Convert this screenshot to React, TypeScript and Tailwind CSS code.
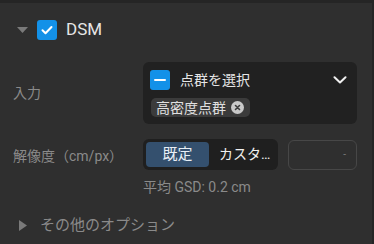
import React from 'react'

const font = { fontFamily: 'Roboto, "Noto Sans CJK JP", sans-serif' }

function CheckIcon() {
  return (
    <svg width="14" height="14" viewBox="0 0 14 14" fill="none">
      <path d="M2.5 7.3l3 3 6-6.3" stroke="white" strokeWidth="2" strokeLinecap="round" strokeLinejoin="round" />
    </svg>
  )
}

export default function App() {
  return (
    <div className="w-[374px] h-[244px] bg-[#252525] pt-[3px] pr-[2px]" style={font}>
      <div className="h-full bg-[#2f2f2f] pt-[17px] relative">
        {/* Header */}
        <div className="flex items-center h-[20px] pl-[17px]">
          <svg width="11" height="6" viewBox="0 0 11 6">
            <path d="M0 0h11L5.5 6z" fill="#7a7a7a" />
          </svg>
          <div className="ml-[9px] w-[20px] h-[20px] rounded-[3px] bg-[#1391e8] flex items-center justify-center">
            <CheckIcon />
          </div>
          <span className="ml-[9px] text-[17px] text-[#e6e6e6]">DSM</span>
        </div>

        {/* Input */}
        <div className="flex items-center mt-[22px]">
          <div className="w-[143px] pl-[13px] text-[14px] text-[#8a8a8a]">入力</div>
          <div className="w-[214px] h-[62px] rounded-[6px] bg-[#212121] pl-[7px] pr-[10px] pt-[8px]">
            <div className="flex items-center h-[20px]">
              <div className="w-[20px] h-[20px] rounded-[3px] bg-[#1391e8] flex items-center justify-center">
                <div className="w-[12px] h-[2px] bg-white rounded-full" />
              </div>
              <span className="ml-[10px] text-[14px] text-[#e6e6e6] flex-1">点群を選択</span>
              <svg width="14" height="8" viewBox="0 0 14 8" fill="none">
                <path d="M1.5 1.2l5.5 5.3 5.5-5.3" stroke="#f0f0f0" strokeWidth="2" strokeLinecap="round" strokeLinejoin="round" />
              </svg>
            </div>
            <div className="mt-[8px] ml-[1px] inline-flex items-center h-[19px] rounded-[5px] bg-[#3b3b3b] pl-[5px] pr-[6px]">
              <span className="text-[14px] text-[#e0e0e0] leading-none">高密度点群</span>
              <span className="ml-[5px] w-[13px] h-[13px] rounded-full bg-[#c9c9c9] flex items-center justify-center">
                <svg width="7" height="7" viewBox="0 0 7 7">
                  <path d="M1.5 1.5l4 4M5.5 1.5l-4 4" stroke="#3b3b3b" strokeWidth="1.6" strokeLinecap="round" />
                </svg>
              </span>
            </div>
          </div>
        </div>

        {/* Resolution */}
        <div className="flex items-center mt-[15px]">
          <div className="w-[143px] pl-[13px] text-[14px] text-[#8a8a8a] pt-[3px]">解像度（cm/px）</div>
          <div className="w-[135px] h-[31px] rounded-[6px] bg-[#1f1f1f] p-[3px] flex">
            <div className="w-[63px] rounded-[4px] bg-[#34506e] flex items-center justify-center text-[15px] text-[#e8eef5]">既定</div>
            <div className="flex-1 min-w-0 pl-[10px] pr-[1px] flex items-center text-[14px] text-[#f0f0f0]">
              <span className="truncate">カスタム</span>
            </div>
          </div>
          <div className="ml-[10px] w-[69px] h-[30px] rounded-[6px] border border-[#474747] flex items-center justify-end pr-[10px] text-[10px] text-[#7a7a7a]">
            -
          </div>
        </div>

        {/* GSD */}
        <div className="ml-[143px] mt-[7px] text-[14px] text-[#8a8a8a]">平均 GSD: 0.2 cm</div>

        {/* Other options */}
        <div className="flex items-center mt-[16px] pl-[19px]">
          <svg width="8" height="11" viewBox="0 0 8 11">
            <path d="M0 0l8 5.5L0 11z" fill="#7a7a7a" />
          </svg>
          <span className="ml-[13px] text-[15px] text-[#8a8a8a]">その他のオプション</span>
        </div>
      </div>
    </div>
  )
}
